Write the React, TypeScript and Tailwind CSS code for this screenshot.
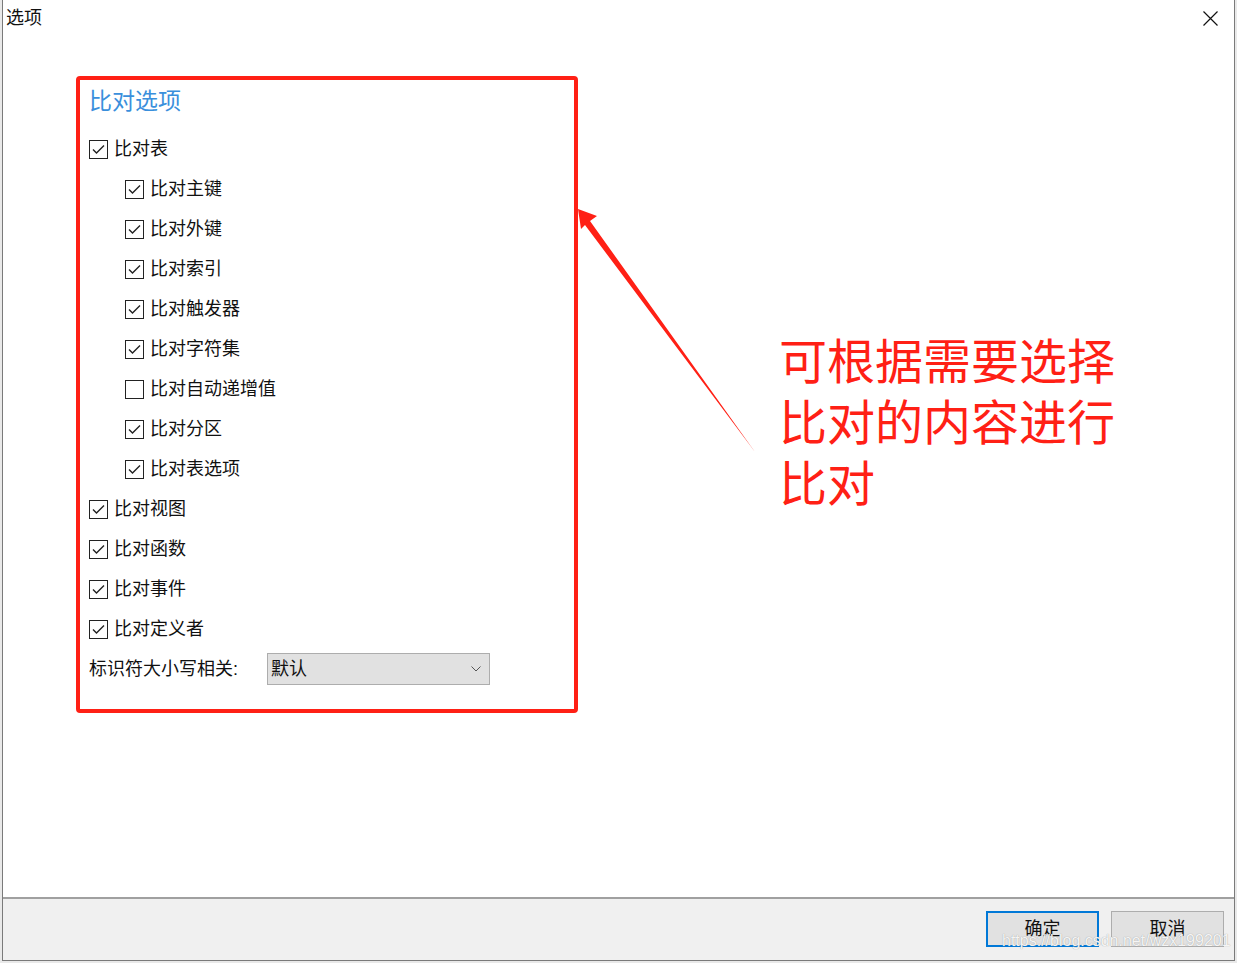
import React from "react";

type Opt = { label: string; checked: boolean; indent?: boolean };

const options: Opt[] = [
  { label: "比对表", checked: true },
  { label: "比对主键", checked: true, indent: true },
  { label: "比对外键", checked: true, indent: true },
  { label: "比对索引", checked: true, indent: true },
  { label: "比对触发器", checked: true, indent: true },
  { label: "比对字符集", checked: true, indent: true },
  { label: "比对自动递增值", checked: false, indent: true },
  { label: "比对分区", checked: true, indent: true },
  { label: "比对表选项", checked: true, indent: true },
  { label: "比对视图", checked: true },
  { label: "比对函数", checked: true },
  { label: "比对事件", checked: true },
  { label: "比对定义者", checked: true },
];

function Check({ checked }: { checked: boolean }) {
  return (
    <span className="flex h-[19px] w-[19px] shrink-0 items-center justify-center border border-[#222] bg-white">
      {checked && (
        <svg width="13" height="11" viewBox="0 0 13 11" fill="none">
          <path d="M1 5.5 L4.5 9 L12 1.5" stroke="#222" strokeWidth="1.4" />
        </svg>
      )}
    </span>
  );
}

export default function App() {
  return (
    <div
      className="relative h-[963px] w-[1237px] overflow-hidden bg-[#e9e9e9] text-[#111]"
      style={{ fontFamily: '"Liberation Sans", "Noto Sans CJK SC", sans-serif' }}
    >
      <div className="ml-[2px] flex h-[961px] w-[1233px] flex-col border-x border-b border-[#7a7a7a] bg-white">
        {/* 标题栏 */}
        <div className="flex h-[38px] shrink-0 items-start justify-between pl-[3px] pr-[16px] pt-[6px]">
          <span className="text-[18px] leading-[24px]">选项</span>
          <svg width="15" height="15" viewBox="0 0 15 15" className="mt-[5px]">
            <path d="M0.5 0.5 L14.5 14.5 M14.5 0.5 L0.5 14.5" stroke="#111" strokeWidth="1.2" />
          </svg>
        </div>

        {/* 内容 */}
        <div className="flex flex-1 items-start pl-[73px] pt-[38px]">
          <div className="flex h-[637px] w-[502px] flex-col rounded-[4px] border-4 border-[#ff2015] pl-[9px] pt-[5px]">
            <div className="text-[23px] leading-[32px] text-[#3a8fdc]">比对选项</div>
            <div className="mt-[12px] flex flex-col">
              {options.map((o) => (
                <label
                  key={o.label}
                  className={"flex h-[40px] items-center gap-[6px] " + (o.indent ? "pl-[36px]" : "")}
                >
                  <Check checked={o.checked} />
                  <span className="text-[18px] leading-[24px]">{o.label}</span>
                </label>
              ))}
              <div className="flex h-[40px] items-center">
                <span className="w-[178px] text-[18px] leading-[24px]">标识符大小写相关:</span>
                <div className="flex h-[32px] w-[223px] items-center justify-between border border-[#adadad] bg-[#e1e1e1] pl-[3px] pr-[8px]">
                  <span className="text-[18px] leading-[24px]">默认</span>
                  <svg width="10" height="6" viewBox="0 0 10 6">
                    <path d="M0.5 0.5 L5 5 L9.5 0.5" stroke="#555" strokeWidth="1" fill="none" />
                  </svg>
                </div>
              </div>
            </div>
          </div>

          <div className="ml-[201px] mt-[256px] text-[48px] leading-[61px] text-[#ff2015]">
            <div>可根据需要选择</div>
            <div>比对的内容进行</div>
            <div>比对</div>
          </div>
        </div>

        {/* 底部按钮 */}
        <div className="flex h-[63px] shrink-0 items-start justify-end gap-[12px] border-t-2 border-[#a0a0a0] bg-[#f0f0f0] pr-[10px] pt-[12px]">
          <button className="flex h-[36px] w-[113px] items-center justify-center border-2 border-[#0078d7] bg-[#e1e1e1] text-[18px] leading-[24px]">
            确定
          </button>
          <button className="flex h-[36px] w-[113px] items-center justify-center border border-[#adadad] bg-[#e1e1e1] text-[18px] leading-[24px]">
            取消
          </button>
        </div>
      </div>

      {/* 箭头标注 */}
      <svg className="pointer-events-none absolute left-0 top-0" width="1237" height="963">
        <polygon
          points="578,209 597,216 590,221 755,452 585,225 581,229"
          fill="#ff2015"
        />
      </svg>

      {/* 水印 */}
      <span
        className="pointer-events-none absolute left-[1002px] top-[931px] text-[16px] leading-[20px] text-white/90 [text-shadow:0_0_1px_#8a8a8a]"
        style={{ fontFamily: '"Liberation Sans", sans-serif' }}
      >
        https://blog.csdn.net/wzx199201
      </span>
    </div>
  );
}
